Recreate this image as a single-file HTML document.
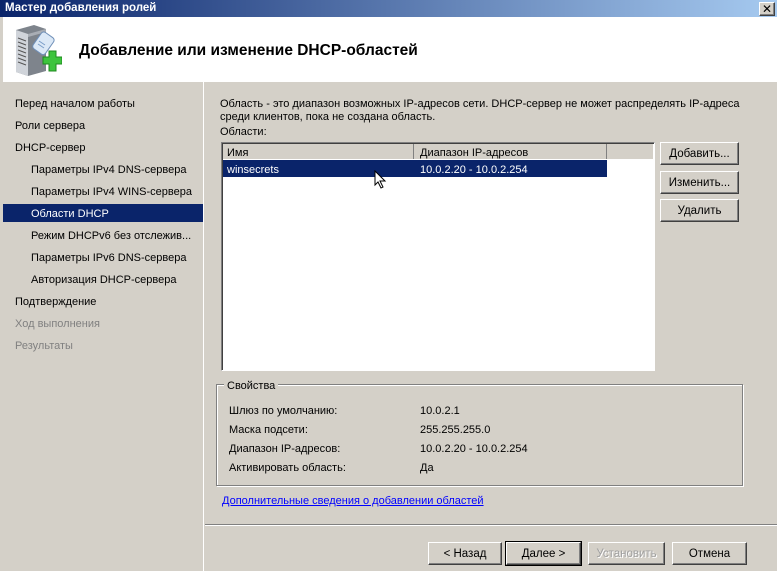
<!DOCTYPE html>
<html><head><meta charset="utf-8"><style>
*{margin:0;padding:0;box-sizing:border-box}
body{width:777px;height:571px;overflow:hidden;background:#d4d0c8;font-family:"Liberation Sans","DejaVu Sans",sans-serif;font-size:11px;color:#000;position:relative}
.a{position:absolute;white-space:nowrap}
.t{position:absolute;white-space:nowrap;margin-top:2px}
.btn{position:absolute;background:#d4d0c8;border:1px solid;border-color:#fff #404040 #404040 #fff;box-shadow:inset -1px -1px #808080;text-align:center;line-height:22px;font-size:11.5px}
</style></head><body>
<div class="a" style="left:0;top:0;width:777px;height:17px;background:linear-gradient(90deg,#0a246a,#a6caf0)"></div>
<div class="t" style="left:5px;top:0px;color:#fff;font-weight:bold;font-size:11.5px">Мастер добавления ролей</div>
<div class="btn" style="left:759px;top:2px;width:16px;height:14px;line-height:12px;font-weight:bold;font-size:12px">✕</div>
<div class="a" style="left:3px;top:17px;width:774px;height:65px;background:#fff"></div>
<svg class="a" style="left:12px;top:24px" width="50" height="54">
<path d="M4 6 L22 1 L34 5 L34 47 L16 52 L4 48Z" fill="#7e848c"/>
<path d="M4 6 L16 10 L16 52 L4 48Z" fill="#d0d4da"/>
<path d="M16 10 L34 5 L34 8 L16 13Z" fill="#a9aeb5"/>
<g stroke="#555" stroke-width="1"><line x1="6" y1="14" x2="14" y2="17"/><line x1="6" y1="18" x2="14" y2="21"/><line x1="6" y1="22" x2="14" y2="25"/><line x1="6" y1="26" x2="14" y2="29"/><line x1="6" y1="30" x2="14" y2="33"/><line x1="6" y1="34" x2="14" y2="37"/><line x1="6" y1="38" x2="14" y2="41"/></g>
<rect x="24" y="9" width="15" height="20" rx="3" transform="rotate(35 31 19)" fill="#dbe8f6" stroke="#6f8fb8"/>
<g stroke="#7a9cc8"><line x1="27" y1="17" x2="33" y2="21"/><line x1="26" y1="20" x2="32" y2="24"/></g>
<path d="M31 33h6v-6h7v6h6v7h-6v7h-7v-7h-6z" fill="#3dc43d" stroke="#1f8a1f"/>
</svg>
<div class="t" style="left:79px;top:40px;font-size:15.5px;font-weight:bold;color:#000">Добавление или изменение DHCP-областей</div>
<div class="a" style="left:203px;top:82px;width:1px;height:489px;background:#fff"></div>
<div class="a" style="left:3px;top:204px;width:200px;height:18px;background:#0a246a"></div>
<div class="t" style="left:15px;top:96px">Перед началом работы</div>
<div class="t" style="left:15px;top:118px">Роли сервера</div>
<div class="t" style="left:15px;top:140px">DHCP-сервер</div>
<div class="t" style="left:31px;top:162px">Параметры IPv4 DNS-сервера</div>
<div class="t" style="left:31px;top:184px">Параметры IPv4 WINS-сервера</div>
<div class="t" style="left:31px;top:206px;color:#fff">Области DHCP</div>
<div class="t" style="left:31px;top:228px">Режим DHCPv6 без отслежив...</div>
<div class="t" style="left:31px;top:250px">Параметры IPv6 DNS-сервера</div>
<div class="t" style="left:31px;top:272px">Авторизация DHCP-сервера</div>
<div class="t" style="left:15px;top:294px">Подтверждение</div>
<div class="t" style="left:15px;top:316px;color:#808080">Ход выполнения</div>
<div class="t" style="left:15px;top:338px;color:#808080">Результаты</div>
<div class="t" style="left:220px;top:96px">Область - это диапазон возможных IP-адресов сети. DHCP-сервер не может распределять IP-адреса</div>
<div class="t" style="left:220px;top:109px">среди клиентов, пока не создана область.</div>
<div class="t" style="left:220px;top:124px">Области:</div>
<div class="a" style="left:221px;top:142px;width:434px;height:229px;background:#fff;border:1px solid;border-color:#808080 #fff #fff #808080;box-shadow:inset 1px 1px #404040"></div>
<div class="a" style="left:223px;top:144px;width:430px;height:15px;background:#d4d0c8"></div>
<div class="a" style="left:413px;top:144px;width:1px;height:15px;background:#808080"></div>
<div class="a" style="left:606px;top:144px;width:1px;height:15px;background:#808080"></div>
<div class="t" style="left:227px;top:145px">Имя</div>
<div class="t" style="left:420px;top:145px">Диапазон IP-адресов</div>
<div class="a" style="left:223px;top:160px;width:384px;height:17px;background:#0a246a"></div>
<div class="t" style="left:227px;top:162px;color:#fff">winsecrets</div>
<div class="t" style="left:420px;top:162px;color:#fff">10.0.2.20 - 10.0.2.254</div>
<svg class="a" style="left:374px;top:170px" width="14" height="20"><path d="M1 1 L1 15 L4 12 L7 18 L9 17 L6 11 L11 11 Z" fill="#fff" stroke="#000"/></svg>
<div class="btn" style="left:660px;top:142px;width:79px;height:23px">Добавить...</div>
<div class="btn" style="left:660px;top:171px;width:79px;height:23px">Изменить...</div>
<div class="btn" style="left:660px;top:199px;width:79px;height:23px">Удалить</div>
<div class="a" style="left:216px;top:384px;width:527px;height:102px;border:1px solid #808080;box-shadow:1px 1px #fff,inset 1px 1px #fff"></div>
<div class="t" style="left:224px;top:378px;background:#d4d0c8;padding:0 3px">Свойства</div>
<div class="t" style="left:229px;top:403px">Шлюз по умолчанию:</div>
<div class="t" style="left:420px;top:403px">10.0.2.1</div>
<div class="t" style="left:229px;top:422px">Маска подсети:</div>
<div class="t" style="left:420px;top:422px">255.255.255.0</div>
<div class="t" style="left:229px;top:441px">Диапазон IP-адресов:</div>
<div class="t" style="left:420px;top:441px">10.0.2.20 - 10.0.2.254</div>
<div class="t" style="left:229px;top:460px">Активировать область:</div>
<div class="t" style="left:420px;top:460px">Да</div>
<div class="t" style="left:222px;top:493px;color:#0000ff;text-decoration:underline">Дополнительные сведения о добавлении областей</div>
<div class="a" style="left:205px;top:524px;width:572px;height:1px;background:#808080"></div>
<div class="a" style="left:205px;top:525px;width:572px;height:1px;background:#fff"></div>
<div class="btn" style="left:428px;top:542px;width:74px;height:23px">&lt; Назад</div>
<div class="btn" style="left:506px;top:542px;width:75px;height:23px;outline:1px solid #000">Далее &gt;</div>
<div class="btn" style="left:588px;top:542px;width:77px;height:23px;color:#a0a0a0;text-shadow:1px 1px #fff">Установить</div>
<div class="btn" style="left:672px;top:542px;width:75px;height:23px">Отмена</div>
</body></html>
